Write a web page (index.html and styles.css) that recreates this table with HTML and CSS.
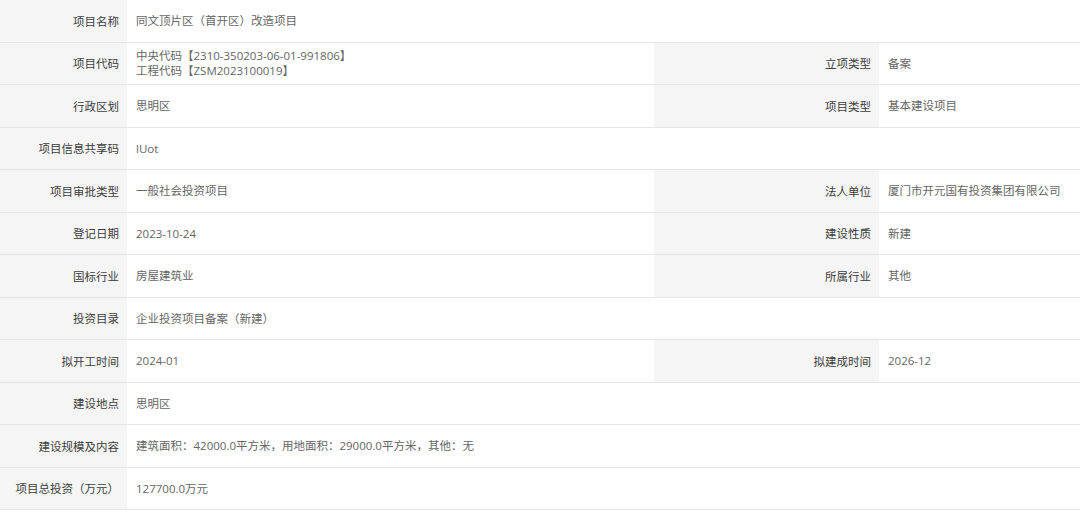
FILE: index.html
```html
<!DOCTYPE html>
<html lang="zh">
<head>
<meta charset="utf-8">
<link rel="stylesheet" href="styles.css">
</head>
<body>
<div class="table">
  <div class="row"><div class="label">项目名称</div><div class="value wide">同文顶片区（首开区）改造项目</div></div>
  <div class="row"><div class="label">项目代码</div><div class="value">中央代码【2310-350203-06-01-991806】<br>工程代码【ZSM2023100019】</div><div class="label">立项类型</div><div class="value">备案</div></div>
  <div class="row"><div class="label">行政区划</div><div class="value">思明区</div><div class="label">项目类型</div><div class="value">基本建设项目</div></div>
  <div class="row"><div class="label">项目信息共享码</div><div class="value wide">lUot</div></div>
  <div class="row"><div class="label">项目审批类型</div><div class="value">一般社会投资项目</div><div class="label">法人单位</div><div class="value">厦门市开元国有投资集团有限公司</div></div>
  <div class="row"><div class="label">登记日期</div><div class="value">2023-10-24</div><div class="label">建设性质</div><div class="value">新建</div></div>
  <div class="row"><div class="label">国标行业</div><div class="value">房屋建筑业</div><div class="label">所属行业</div><div class="value">其他</div></div>
  <div class="row"><div class="label">投资目录</div><div class="value wide">企业投资项目备案（新建）</div></div>
  <div class="row"><div class="label">拟开工时间</div><div class="value">2024-01</div><div class="label">拟建成时间</div><div class="value">2026-12</div></div>
  <div class="row"><div class="label">建设地点</div><div class="value wide">思明区</div></div>
  <div class="row"><div class="label">建设规模及内容</div><div class="value wide">建筑面积：42000.0平方米，用地面积：29000.0平方米，其他：无</div></div>
  <div class="row"><div class="label">项目总投资（万元）</div><div class="value wide">127700.0万元</div></div>
</div>
</body>
</html>
```
FILE: styles.css
```css
html, body {
  margin: 0;
  padding: 0;
  background: #ffffff;
}
body {
  font-family: "Open Sans", "Noto Sans CJK SC", sans-serif;
  font-size: 11.5px;
  width: 1080px;
  height: 512px;
  overflow: hidden;
}
.table {
  display: flex;
  flex-direction: column;
}
.row {
  display: grid;
  grid-template-columns: 127px 527px 225px 1fr;
  height: 42.5px;
  box-sizing: border-box;
  border-bottom: 1.5px solid #e6e6e6;
}
.label {
  background: #f5f5f5;
  color: #3c3c3c;
  padding-right: 8px;
  display: flex;
  align-items: center;
  justify-content: flex-end;
  white-space: nowrap;
}
.value {
  color: #666666;
  padding-left: 9px;
  display: flex;
  align-items: center;
  line-height: 15px;
  white-space: nowrap;
}
.value.wide {
  grid-column: 2 / 5;
}
```
